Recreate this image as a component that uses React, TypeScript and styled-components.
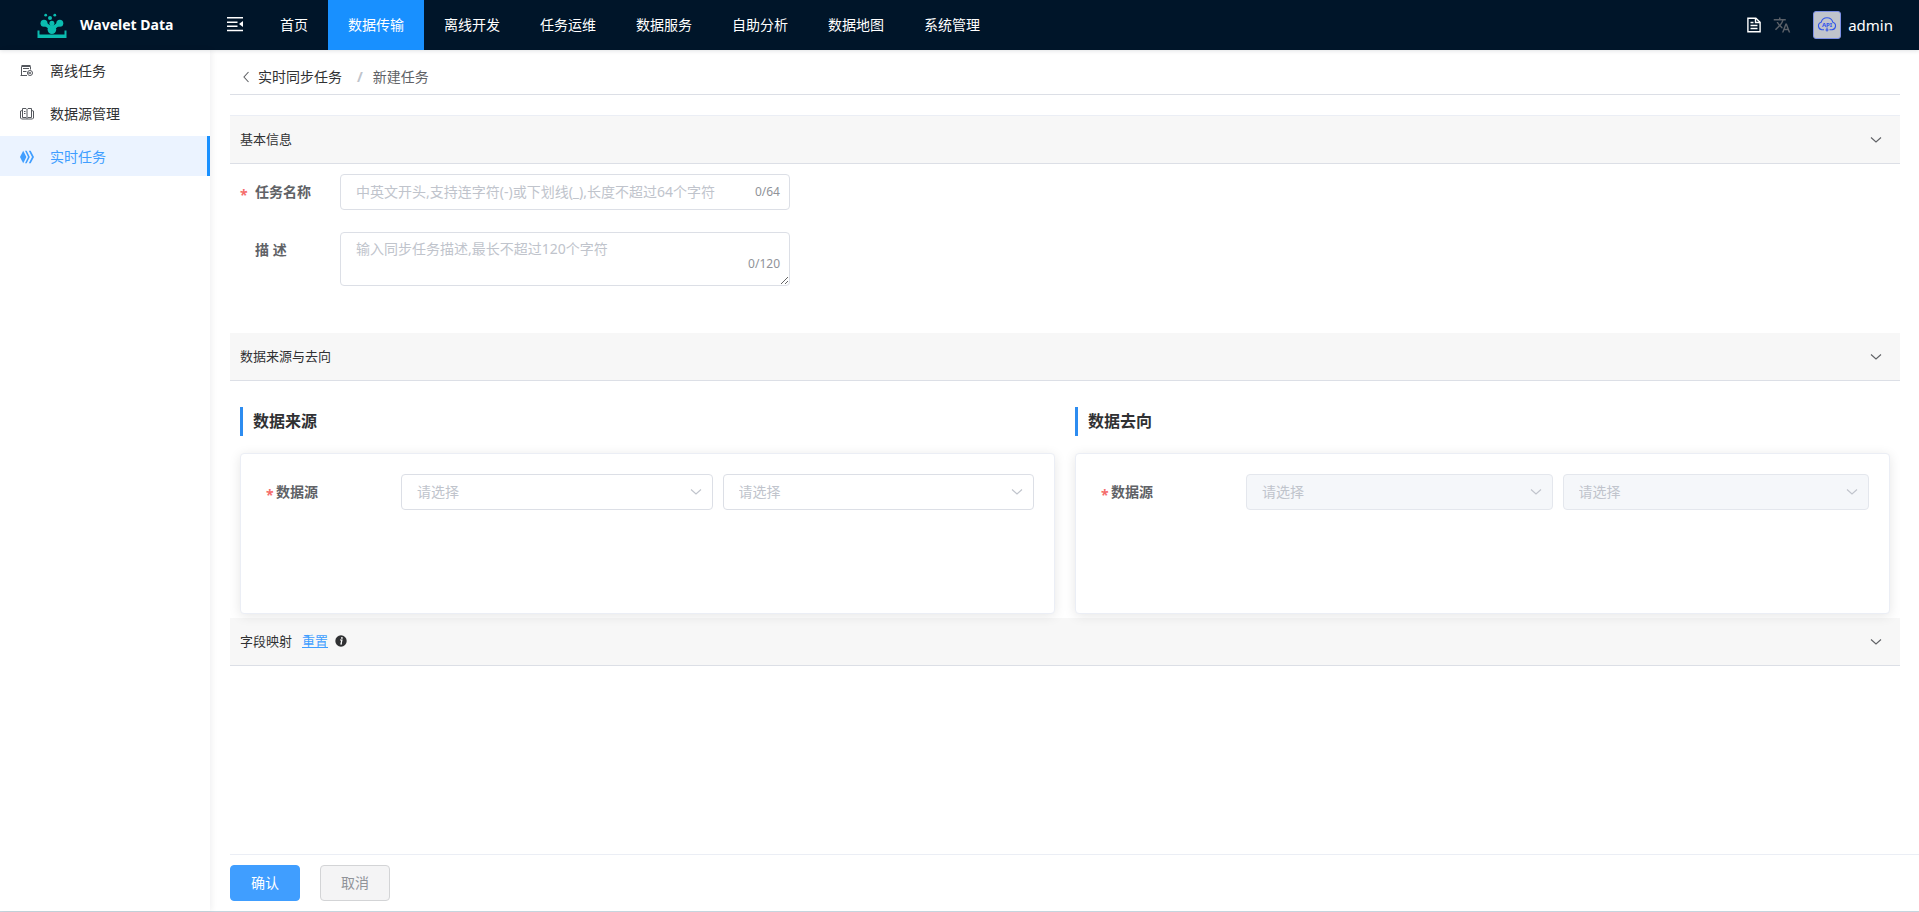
import React, { useState } from 'react';
import styled, { createGlobalStyle } from 'styled-components';
import { MdTranslate } from 'react-icons/md';

const GlobalStyle = createGlobalStyle`
  *, *::before, *::after { box-sizing: border-box; }
  body {
    margin: 0;
    background: #fff;
    color: #303133;
    font-family: "Noto Sans", "Noto Sans CJK SC", sans-serif;
    font-size: 14px;
    line-height: 20px;
  }
  button, input, select, textarea { font: inherit; color: inherit; }
  a { text-decoration: none; color: inherit; }
  h1, h2, h3, p { margin: 0; font-weight: 400; font-size: inherit; }
  svg { display: block; flex: none; }
`;

const Page = styled.div`
  display: flex;
  flex-direction: column;
  min-height: 100vh;
  border-bottom: 1px solid #c6d5de;
`;

const Header = styled.header`
  display: flex;
  align-items: stretch;
  height: 50px;
  background: #001529;
  color: #fff;
  box-shadow: 0 1px 4px rgba(0, 21, 41, 0.12);
`;

const Brand = styled.a`
  display: flex;
  align-items: center;
  gap: 12px;
  width: 210px;
  padding-left: 37px;
  font-weight: 700;
`;

const IconButton = styled.button`
  display: flex;
  align-items: center;
  justify-content: center;
  padding: 0;
  border: 0;
  background: none;
  cursor: pointer;
`;

const FoldButton = styled(IconButton)`
  width: 50px;
  padding-bottom: 2px;
`;

const TopNav = styled.nav`
  display: flex;
  flex: 1;
`;

const TopLink = styled.a<{ $active?: boolean }>`
  display: flex;
  align-items: center;
  padding: 0 20px;
  background: ${(p) => (p.$active ? '#1890ff' : 'transparent')};
`;

const Tools = styled.div`
  display: flex;
  align-items: center;
  gap: 12px;
  padding-right: 26px;
`;

const User = styled.a`
  display: flex;
  align-items: center;
  gap: 7px;
  margin-left: 10px;
  font-size: 15px;
`;

const Avatar = styled.span`
  display: flex;
  align-items: center;
  justify-content: center;
  width: 28px;
  height: 28px;
  border: 1px solid #7d90e6;
  border-radius: 3px;
  background: #c0c4cc;
`;

const Body = styled.div`
  display: flex;
  flex: 1;
`;

const Sidebar = styled.nav`
  display: flex;
  flex-direction: column;
  gap: 3px;
  width: 210px;
  box-shadow: 2px 0 6px rgba(0, 21, 41, 0.06);
`;

const SideLink = styled.a<{ $active?: boolean }>`
  display: flex;
  align-items: center;
  gap: 16px;
  height: 40px;
  padding: 2px 0 0 20px;
  border-right: 3px solid ${(p) => (p.$active ? '#1890ff' : 'transparent')};
  background: ${(p) => (p.$active ? '#ebf3ff' : 'transparent')};
  color: ${(p) => (p.$active ? '#409eff' : '#303133')};
`;

const Main = styled.main`
  display: flex;
  flex: 1;
  flex-direction: column;
  min-width: 0;
  padding-left: 20px;
`;

const Content = styled.div`
  flex: 1;
  margin-right: 19px;
`;

const Crumbs = styled.nav`
  display: flex;
  align-items: center;
  height: 45px;
  padding: 10px 10px 0;
  border-bottom: 1px solid #dcdfe6;
  margin-bottom: 20px;
`;

const CrumbLink = styled.a`
  display: flex;
  align-items: center;
  gap: 8px;
`;

const Slash = styled.span`
  margin: 0 10px 0 15px;
  color: #c0c4cc;
  font-weight: 700;
`;

const CrumbCurrent = styled.span`
  color: #606266;
`;

const SectionBar = styled.div<{ $first?: boolean }>`
  display: flex;
  align-items: center;
  gap: 10px;
  height: ${(p) => (p.$first ? 49 : 48)}px;
  padding: 0 18px 1px 10px;
  border-top: ${(p) => (p.$first ? '1px solid #ebeef5' : '0')};
  border-bottom: 1px solid #dcdfe6;
  background: #f7f7f7;
  font-size: 13px;
`;

const Toggle = styled(IconButton)`
  margin-left: auto;
  padding-top: 2px;
`;

const ResetLink = styled.a`
  color: #409eff;
  text-decoration: underline;
`;

const Hint = styled.span`
  display: flex;
  margin-left: -3px;
`;

const BasicForm = styled.div`
  display: flex;
  flex-direction: column;
  gap: 22px;
  max-width: 560px;
  padding: 10px 0 47px;
`;

const Field = styled.div`
  display: flex;
`;

const FieldLabel = styled.label<{ $required?: boolean }>`
  display: flex;
  width: 110px;
  height: 36px;
  padding-left: ${(p) => (p.$required ? 10 : 25)}px;
  color: #606266;
  font-weight: 700;
  line-height: 36px;
  white-space: pre;
  &::before {
    content: ${(p) => (p.$required ? "'*'" : 'none')};
    width: 15px;
    padding-top: 3px;
    color: #f56c6c;
  }
`;

const InputBox = styled.div`
  display: flex;
  flex: 1;
  height: 36px;
  align-items: center;
  padding: 0 9px 0 15px;
  border: 1px solid #dcdfe6;
  border-radius: 4px;
`;

const TextInput = styled.input`
  flex: 1;
  min-width: 0;
  padding: 0;
  border: 0;
  outline: 0;
  background: none;
  &::placeholder { color: #c0c4cc; }
`;

const Count = styled.span`
  color: #909399;
  font-size: 12px;
`;

const AreaBox = styled.div`
  position: relative;
  flex: 1;
  display: flex;
`;

const TextArea = styled.textarea`
  flex: 1;
  height: 54px;
  padding: 6px 15px;
  border: 1px solid #dcdfe6;
  border-radius: 4px;
  outline: 0;
  resize: vertical;
  &::placeholder { color: #c0c4cc; }
`;

const AreaCount = styled(Count)`
  position: absolute;
  right: 10px;
  bottom: 12px;
`;

const Columns = styled.div`
  display: grid;
  grid-template-columns: 1fr 1fr;
  gap: 20px;
  padding: 26px 10px 4px;
`;

const ColumnTitle = styled.h2`
  padding-left: 10px;
  border-left: 3px solid #2d8cf0;
  margin-bottom: 17px;
  font-size: 16px;
  font-weight: 700;
  line-height: 29px;
`;

const Card = styled.div`
  display: flex;
  align-items: flex-start;
  min-height: 161px;
  padding: 20px;
  border: 1px solid #ebeef5;
  border-radius: 4px;
  background: #fff;
  box-shadow: 0 2px 12px rgba(0, 0, 0, 0.1);
`;

const SourceLabel = styled.label<{ $wide?: boolean }>`
  display: flex;
  width: ${(p) => (p.$wide ? 150 : 140)}px;
  height: 36px;
  padding-left: 5px;
  color: #606266;
  font-weight: 700;
  line-height: 36px;
  &::before {
    content: '*';
    width: 10px;
    padding-top: 3px;
    color: #f56c6c;
  }
`;

const Selects = styled.div`
  display: flex;
  flex: 1;
  gap: 10px;
`;

const SelectBox = styled.div`
  position: relative;
  flex: 1;
  svg {
    position: absolute;
    right: 11px;
    top: 14px;
    pointer-events: none;
  }
`;

const Select = styled.select`
  display: block;
  width: 100%;
  height: 36px;
  padding: 0 30px 0 15px;
  border: 1px solid #dcdfe6;
  border-radius: 4px;
  background: #fff;
  color: #c0c4cc;
  appearance: none;
  outline: 0;
  &:disabled {
    border-color: #e4e7ed;
    background: #f5f7fa;
    opacity: 1;
  }
`;

const Footer = styled.footer`
  display: flex;
  gap: 20px;
  padding: 10px 0;
  border-top: 1px solid #ebeef5;
`;

const Button = styled.button<{ $primary?: boolean }>`
  width: 70px;
  height: 36px;
  padding: 0;
  border: 1px solid ${(p) => (p.$primary ? '#409eff' : '#d3d4d6')};
  border-radius: 4px;
  background: ${(p) => (p.$primary ? '#409eff' : '#f4f4f5')};
  color: ${(p) => (p.$primary ? '#fff' : '#909399')};
  cursor: pointer;
`;

const Logo = () => (
  <svg width="31" height="26" viewBox="0 0 31 26" fill="#0bbcb0">
    <circle cx="8.700" cy="3.200" r="1.400" />
    <circle cx="17.800" cy="3.200" r="1.400" />
    <circle cx="13" cy="6" r="2" />
    <circle cx="14.900" cy="11.200" r="2.500" />
    <circle cx="7" cy="11.200" r="3.500" />
    <circle cx="22.800" cy="11.200" r="3.500" />
    <path d="M8 12.500c3.500.5 3.500 3.500 6.900 3.500s3.400-3 6.900-3.500" fill="none" stroke="#0bbcb0" strokeWidth="3.600" />
    <ellipse cx="14.900" cy="17.500" rx="4.300" ry="4.500" />
    <path d="M.5 18.500h2v4h25v-4h2V26H.5Z" />
  </svg>
);

const FoldIcon = () => (
  <svg width="16" height="16" viewBox="0 0 16 16" fill="#fff">
    <path d="M0 1h16v1.400H0zM0 5.600h10.500V7H0zM0 9.600h10.500V11H0zM0 13.800h16v1.400H0z" />
    <path d="M16 5v6l-4-3z" />
  </svg>
);

const DocumentIcon = () => (
  <svg width="14" height="16" viewBox="0 0 14 16" fill="none" stroke="#fff" strokeWidth="1.400">
    <path d="M.9 1.200h8L13.100 5.200v9.600H.9Z" />
    <path d="M8.500 1.500v4h4.500M3.500 5.500h3M3.500 8.500h7M3.500 11.500h7" />
  </svg>
);

const CloudApiIcon = () => (
  <svg width="20" height="16" viewBox="0 0 20 16" fill="none" stroke="#3054eb" strokeWidth="1.100">
    <path d="M7 12.800H5A3.900 3.900 0 0 1 4.200 5.200 6 6 0 0 1 15.800 5.200 3.900 3.900 0 0 1 15 12.800H12.500M10 10.500v4M8.500 13h3" />
    <text x="10" y="9.500" textAnchor="middle" fontSize="6" fontWeight="700" fill="#3054eb" stroke="none">API</text>
  </svg>
);

const OfflineIcon = () => (
  <svg width="14" height="14" viewBox="0 0 14 14" fill="none" stroke="#55585e" strokeWidth="1">
    <path d="M6.500 11.500h-5v-9h9v3M1.500 1.500h9M3 4.500h6M3 7.500h3.500M.5 11.500H7" />
    <circle cx="10" cy="9" r="2.500" />
    <path d="M7 9h4M10 8v2" />
  </svg>
);

const SourceIcon = () => (
  <svg width="14" height="14" viewBox="0 0 14 14" fill="none" stroke="#55585e" strokeWidth="1">
    <path d="M2.500 1.500h3.500l1 1 1-1h3.500v9H8l-1 1-1-1H2.500ZM7 2.500v8.500M2.500 3.500l-2 .5v7l1 1h11l1-1V4l-2-.5M4 4.500h1.500M4 6.500h1.500" />
  </svg>
);

const RealtimeIcon = () => (
  <svg width="14" height="14" viewBox="0 0 14 14" fill="#409eff">
    <path d="M0 7 3.200.8 6.400 7l-3.200 6.200Z" />
    <path d="M5 .8h1.700L9.800 7l-3.100 6.200H5L8 7ZM8.800.8h1.900L14 7l-3.300 6.200H8.800L12 7Z" />
  </svg>
);

const InfoIcon = () => (
  <svg width="12" height="12" viewBox="0 0 12 12">
    <circle cx="6" cy="6" r="5.700" fill="#303133" />
    <path d="M5 5h1.900L6 9h1" fill="none" stroke="#fff" strokeWidth="1.200" />
    <circle cx="6.900" cy="2.900" r=".9" fill="#fff" />
  </svg>
);

const ChevronDown = ({ color = '#606266' }: { color?: string }) => (
  <svg width="12" height="8" viewBox="0 0 12 8" fill="none" stroke={color} strokeWidth="1.100">
    <path d="m1 1.500 5 4.500 5-4.500" />
  </svg>
);

const ChevronLeft = () => (
  <svg width="10" height="12" viewBox="0 0 10 12" fill="none" stroke="#606266" strokeWidth="1.100">
    <path d="M8.500 1 4 6l4.500 5" />
  </svg>
);

const topLinks = ['首页', '数据传输', '离线开发', '任务运维', '数据服务', '自助分析', '数据地图', '系统管理'];

const sideLinks = [
  { label: '离线任务', icon: <OfflineIcon /> },
  { label: '数据源管理', icon: <SourceIcon /> },
  { label: '实时任务', icon: <RealtimeIcon /> },
];

type PickerProps = { title: string; id: string; disabled?: boolean };

const SourcePicker = ({ title, id, disabled }: PickerProps) => (
  <section>
    <ColumnTitle>{title}</ColumnTitle>
    <Card>
      <SourceLabel id={`${id}-label`} htmlFor={id} $wide={disabled}>数据源</SourceLabel>
      <Selects>
        <SelectBox>
          <Select id={id} disabled={disabled}>
            <option>请选择</option>
          </Select>
          <ChevronDown color="#c0c4cc" />
        </SelectBox>
        <SelectBox>
          <Select aria-labelledby={`${id}-label`} disabled={disabled}>
            <option>请选择</option>
          </Select>
          <ChevronDown color="#c0c4cc" />
        </SelectBox>
      </Selects>
    </Card>
  </section>
);

export default function App() {
  const [name, setName] = useState('');
  const [desc, setDesc] = useState('');

  return (
    <Page>
      <GlobalStyle />
      <Header>
        <Brand href="#">
          <Logo />
          Wavelet Data
        </Brand>
        <FoldButton aria-label="收起菜单">
          <FoldIcon />
        </FoldButton>
        <TopNav>
          {topLinks.map((label) => (
            <TopLink key={label} href="#" $active={label === '数据传输'}>{label}</TopLink>
          ))}
        </TopNav>
        <Tools>
          <IconButton aria-label="文档"><DocumentIcon /></IconButton>
          <IconButton aria-label="语言"><MdTranslate size={18} color="#5a6068" /></IconButton>
          <User href="#">
            <Avatar><CloudApiIcon /></Avatar>
            admin
          </User>
        </Tools>
      </Header>
      <Body>
        <Sidebar>
          {sideLinks.map(({ label, icon }) => (
            <SideLink key={label} href="#" $active={label === '实时任务'}>
              {icon}
              {label}
            </SideLink>
          ))}
        </Sidebar>
        <Main>
          <Content>
            <Crumbs>
              <CrumbLink href="#">
                <ChevronLeft />
                实时同步任务
              </CrumbLink>
              <Slash>/</Slash>
              <CrumbCurrent>新建任务</CrumbCurrent>
            </Crumbs>

            <SectionBar $first>
              <h2>基本信息</h2>
              <Toggle aria-label="展开或收起"><ChevronDown /></Toggle>
            </SectionBar>
            <BasicForm>
              <Field>
                <FieldLabel htmlFor="task-name" $required>任务名称</FieldLabel>
                <InputBox>
                  <TextInput
                    id="task-name"
                    maxLength={64}
                    value={name}
                    onChange={(e) => setName(e.target.value)}
                    placeholder="中英文开头,支持连字符(-)或下划线(_),长度不超过64个字符"
                  />
                  <Count>{name.length}/64</Count>
                </InputBox>
              </Field>
              <Field>
                <FieldLabel htmlFor="task-desc">描 述</FieldLabel>
                <AreaBox>
                  <TextArea
                    id="task-desc"
                    maxLength={120}
                    value={desc}
                    onChange={(e) => setDesc(e.target.value)}
                    placeholder="输入同步任务描述,最长不超过120个字符"
                  />
                  <AreaCount>{desc.length}/120</AreaCount>
                </AreaBox>
              </Field>
            </BasicForm>

            <SectionBar>
              <h2>数据来源与去向</h2>
              <Toggle aria-label="展开或收起"><ChevronDown /></Toggle>
            </SectionBar>
            <Columns>
              <SourcePicker title="数据来源" id="source" />
              <SourcePicker title="数据去向" id="target" disabled />
            </Columns>

            <SectionBar>
              <h2>字段映射</h2>
              <ResetLink href="#">重置</ResetLink>
              <Hint><InfoIcon /></Hint>
              <Toggle aria-label="展开或收起"><ChevronDown /></Toggle>
            </SectionBar>
          </Content>
          <Footer>
            <Button $primary>确认</Button>
            <Button>取消</Button>
          </Footer>
        </Main>
      </Body>
    </Page>
  );
}
